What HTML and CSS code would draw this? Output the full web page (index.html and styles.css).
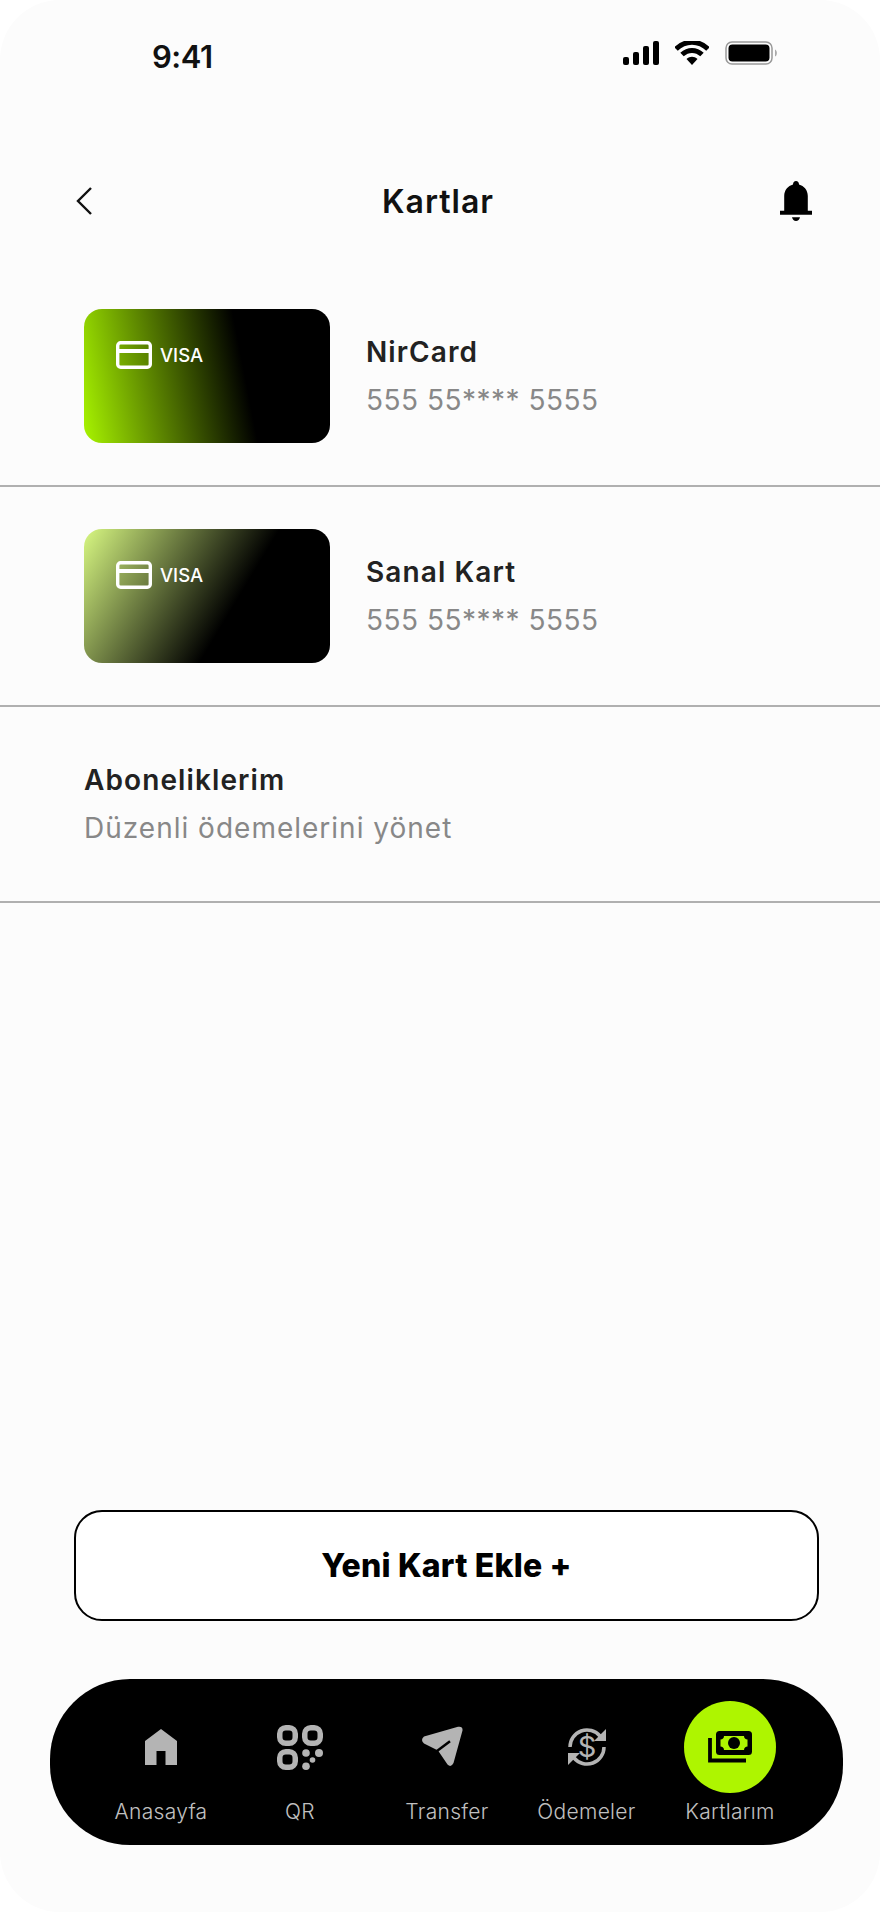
FILE: index.html
```html
<!DOCTYPE html>
<html lang="tr">
<head>
<meta charset="utf-8">
<title>Kartlar</title>
<link rel="stylesheet" href="styles.css">
</head>
<body>
<div class="screen">
  <div class="status">
    <span class="time">9:41</span>
    <div class="status-icons">
      <svg class="ic-signal" viewBox="0 0 36 24"><rect x="0" y="16" width="6" height="8" rx="2"/><rect x="10" y="11" width="6" height="13" rx="2"/><rect x="20" y="5" width="6" height="19" rx="2"/><rect x="30" y="0" width="6" height="24" rx="2"/></svg>
      <svg class="ic-wifi" viewBox="0 0 34 24"><path d="M1 8 C10 -1 24 -1 33 8" fill="none" stroke="#000" stroke-width="5"/><path d="M7 13.5 C13 8 21 8 27 13.5" fill="none" stroke="#000" stroke-width="5"/><path d="M11.5 18 C15 15 19 15 22.5 18 L17 24 Z"/></svg>
      <svg class="ic-batt" viewBox="0 0 53 24"><rect x="1" y="1" width="46" height="22" rx="6" fill="none" stroke="#999" stroke-width="1.5"/><rect x="3.5" y="3.5" width="41" height="17" rx="4"/><path d="M50 8.5 C52.5 9.5 52.5 14.5 50 15.5 Z" fill="#aaa"/></svg>
    </div>
  </div>

  <header class="topbar">
    <svg class="ic-back" viewBox="0 0 18 28"><path d="M16 1 L3 14 L16 27" fill="none" stroke="#111" stroke-width="2.4"/></svg>
    <h1 class="title">Kartlar</h1>
    <svg class="ic-bell" viewBox="0 0 32 40"><path d="M16 0 C17.8 0 19 1.2 19 3.5 C24 5 27.8 9 27.8 15 V29.7 H32 V33.7 H0 V29.7 H4.2 V15 C4.2 9 8 5 13 3.5 C13 1.2 14.2 0 16 0 Z"/><path d="M12 36.3 H20 C19.5 38.5 18 40 16 40 C14 40 12.5 38.5 12 36.3 Z"/></svg>
  </header>

  <section class="list">
    <div class="row row-card">
      <div class="card card-green">
        <svg class="ic-card" viewBox="0 0 36 28"><rect x="1.7" y="1.7" width="32.6" height="24.6" rx="3" fill="none" stroke="#fff" stroke-width="3.4"/><rect x="2" y="8" width="32" height="4" fill="#fff"/></svg>
        <span class="visa">VISA</span>
      </div>
      <div class="info">
        <div class="name">NirCard</div>
        <div class="sub sub-num">555 55**** 5555</div>
      </div>
    </div>
    <div class="row row-card">
      <div class="card card-soft">
        <svg class="ic-card" viewBox="0 0 36 28"><rect x="1.7" y="1.7" width="32.6" height="24.6" rx="3" fill="none" stroke="#fff" stroke-width="3.4"/><rect x="2" y="8" width="32" height="4" fill="#fff"/></svg>
        <span class="visa">VISA</span>
      </div>
      <div class="info">
        <div class="name">Sanal Kart</div>
        <div class="sub sub-num">555 55**** 5555</div>
      </div>
    </div>
    <div class="row row-text">
      <div class="info">
        <div class="name">Aboneliklerim</div>
        <div class="sub">Düzenli ödemelerini yönet</div>
      </div>
    </div>
  </section>

  <div class="spacer"></div>

  <button class="add">Yeni Kart Ekle +</button>

  <nav class="nav">
    <div class="nav-item">
      <div class="nav-icon"><svg class="ic-home" viewBox="0 0 32 36"><path d="M16 0 L32 12 V36 H20.5 V22 H11.5 V36 H0 V12 Z" fill="#b4b4b4"/></svg></div>
      <span class="nav-label">Anasayfa</span>
    </div>
    <div class="nav-item">
      <div class="nav-icon"><svg class="ic-qr" viewBox="0 0 46 45"><g fill="none" stroke="#b4b4b4" stroke-width="5.5"><rect x="2.75" y="2.75" width="15.5" height="15.5" rx="6"/><rect x="27.75" y="2.75" width="15.5" height="15.5" rx="6"/><rect x="2.75" y="26.75" width="15.5" height="15.5" rx="6"/></g><g fill="#b4b4b4"><circle cx="29" cy="28" r="3.8"/><circle cx="42" cy="28" r="4"/><circle cx="35.5" cy="35" r="2.8"/><circle cx="29" cy="41.2" r="3.8"/></g></svg></div>
      <span class="nav-label">QR</span>
    </div>
    <div class="nav-item">
      <div class="nav-icon"><svg class="ic-plane" viewBox="0 0 41 41"><path d="M2 10.5 L36 0.8 Q41 0 40.500 4.500 L31.500 37 Q29 42 25.500 38.500 L16 24.500 L2 17.500 Q-2 14 2 10.500 Z" fill="#b4b4b4"/><path d="M15 25 L28 15.300" fill="none" stroke="#000" stroke-width="2.500"/></svg></div>
      <span class="nav-label">Transfer</span>
    </div>
    <div class="nav-item">
      <div class="nav-icon"><svg class="ic-swap" viewBox="0 0 44 42"><g fill="none" stroke="#b4b4b4" stroke-width="3.500"><path d="M5 21 A17 17 0 0 1 35 10"/><path d="M39 21 A17 17 0 0 1 9 32"/></g><g fill="#b4b4b4"><path d="M41 3 V15 H29 Z"/><path d="M3 39 V27 H15 Z"/></g><text x="22" y="30.500" class="dollar">$</text></svg></div>
      <span class="nav-label">Ödemeler</span>
    </div>
    <div class="nav-item">
      <div class="nav-active"><svg class="ic-money" viewBox="0 0 44 32"><rect x="8" y="0" width="36" height="24" rx="3.500" fill="#000"/><path d="M16 5 H36 C36 7 37.500 8.500 39.500 8.500 V15.500 C37.500 15.500 36 17 36 19 H16 C16 17 14.500 15.500 12.500 15.500 V8.500 C14.500 8.500 16 7 16 5 Z" fill="#aef500"/><circle cx="26" cy="12" r="6" fill="#000"/><path d="M2 7 V29.500 H38" fill="none" stroke="#000" stroke-width="3.800"/></svg></div>
      <span class="nav-label">Kartlarım</span>
    </div>
  </nav>
</div>
</body>
</html>
```

FILE: styles.css
```css
html, body { margin: 0; padding: 0; background: #fff; }
* { box-sizing: border-box; }
body { font-family: Inter, "Liberation Sans", sans-serif; color: #1c1c1c; }

.screen {
  width: 880px;
  height: 1912px;
  background: #fcfcfc;
  border-radius: 60px;
  display: flex;
  flex-direction: column;
  overflow: hidden;
}

.status {
  height: 142px;
  padding: 39px 102px 0 152px;
  display: flex;
  justify-content: space-between;
  align-items: flex-start;
}
.time { font-size: 31px; line-height: 36px; font-weight: 600; color: #111; letter-spacing: -0.5px; }
.status-icons { display: flex; gap: 16px; margin-top: 2px; }
.ic-signal { width: 36px; height: 24px; fill: #000; }
.ic-wifi { width: 34px; height: 24px; fill: #000; }
.ic-batt { width: 53px; height: 24px; fill: #000; }

.topbar {
  height: 100px;
  padding: 0 68px 0 75px;
  display: flex;
  align-items: center;
  justify-content: space-between;
}
.ic-back { width: 18px; height: 28px; margin-top: 18px; }
.title { margin: 18px 0 0 3px; font-size: 32px; font-weight: 600; color: #111; letter-spacing: 1px; }
.ic-bell { width: 32px; height: 40px; margin-top: 18px; }

.list { margin-top: 24px; }
.row { border-bottom: 2px solid #b0b0b0; padding: 0 84px; display: flex; align-items: center; gap: 36px; }
.row-card { height: 220px; }
.row-text { height: 196px; }
.row:first-child { height: 221px; padding-top: 1px; }

.card {
  width: 246px;
  height: 134px;
  border-radius: 18px;
  display: flex;
  align-items: center;
  gap: 8px;
  padding: 0 0 42px 32px;
}
.card-green { background: linear-gradient(79deg, #a8f400 0%, #000 64%); }
.card-soft { background: linear-gradient(121deg, #d8f882 0%, #000 60%); }
.ic-card { width: 36px; height: 28px; }
.visa { font-size: 18.5px; font-weight: 500; color: #fff; }

.info { display: flex; flex-direction: column; gap: 16px; }
.name { font-size: 28px; line-height: 32px; font-weight: 600; color: #222; letter-spacing: 1.1px; }
.sub { font-size: 28px; line-height: 32px; font-weight: 400; color: #888; letter-spacing: 1px; }
.sub-num { letter-spacing: 0.5px; }

.spacer { flex: 1; }

.add {
  width: 745px;
  height: 111px;
  margin: 0 0 58px 74px;
  background: #fff;
  border: 2px solid #000;
  border-radius: 28px;
  font-family: inherit;
  font-size: 32px;
  font-weight: 800;
  letter-spacing: 0.2px;
  color: #000;
}

.nav {
  width: 793px;
  height: 166px;
  margin: 0 0 67px 50px;
  background: #000;
  border-radius: 80px;
  display: grid;
  grid-template-columns: 138px 140px 154px 125px 162px;
  padding: 0 0 0 42px;
}
.nav-item { display: flex; flex-direction: column; align-items: center; }
.nav-icon { height: 120px; padding-top: 16px; display: flex; align-items: center; justify-content: center; }
.nav-active {
  width: 92px;
  height: 92px;
  margin-top: 22px;
  margin-bottom: 6px;
  border-radius: 50%;
  background: #aef500;
  display: flex;
  align-items: center;
  justify-content: center;
}
.nav-label { font-size: 21px; line-height: 26px; font-weight: 300; color: #c0c0c0; letter-spacing: 0.3px; }
.ic-home { width: 32px; height: 36px; }
.ic-qr { width: 46px; height: 45px; }
.ic-plane { width: 41px; height: 41px; margin: -2px 9px 0 0; }
.ic-swap { width: 44px; height: 42px; }
.ic-money { width: 44px; height: 32px; }
.dollar { font-size: 29px; font-weight: 400; fill: #b4b4b4; text-anchor: middle; }
```
